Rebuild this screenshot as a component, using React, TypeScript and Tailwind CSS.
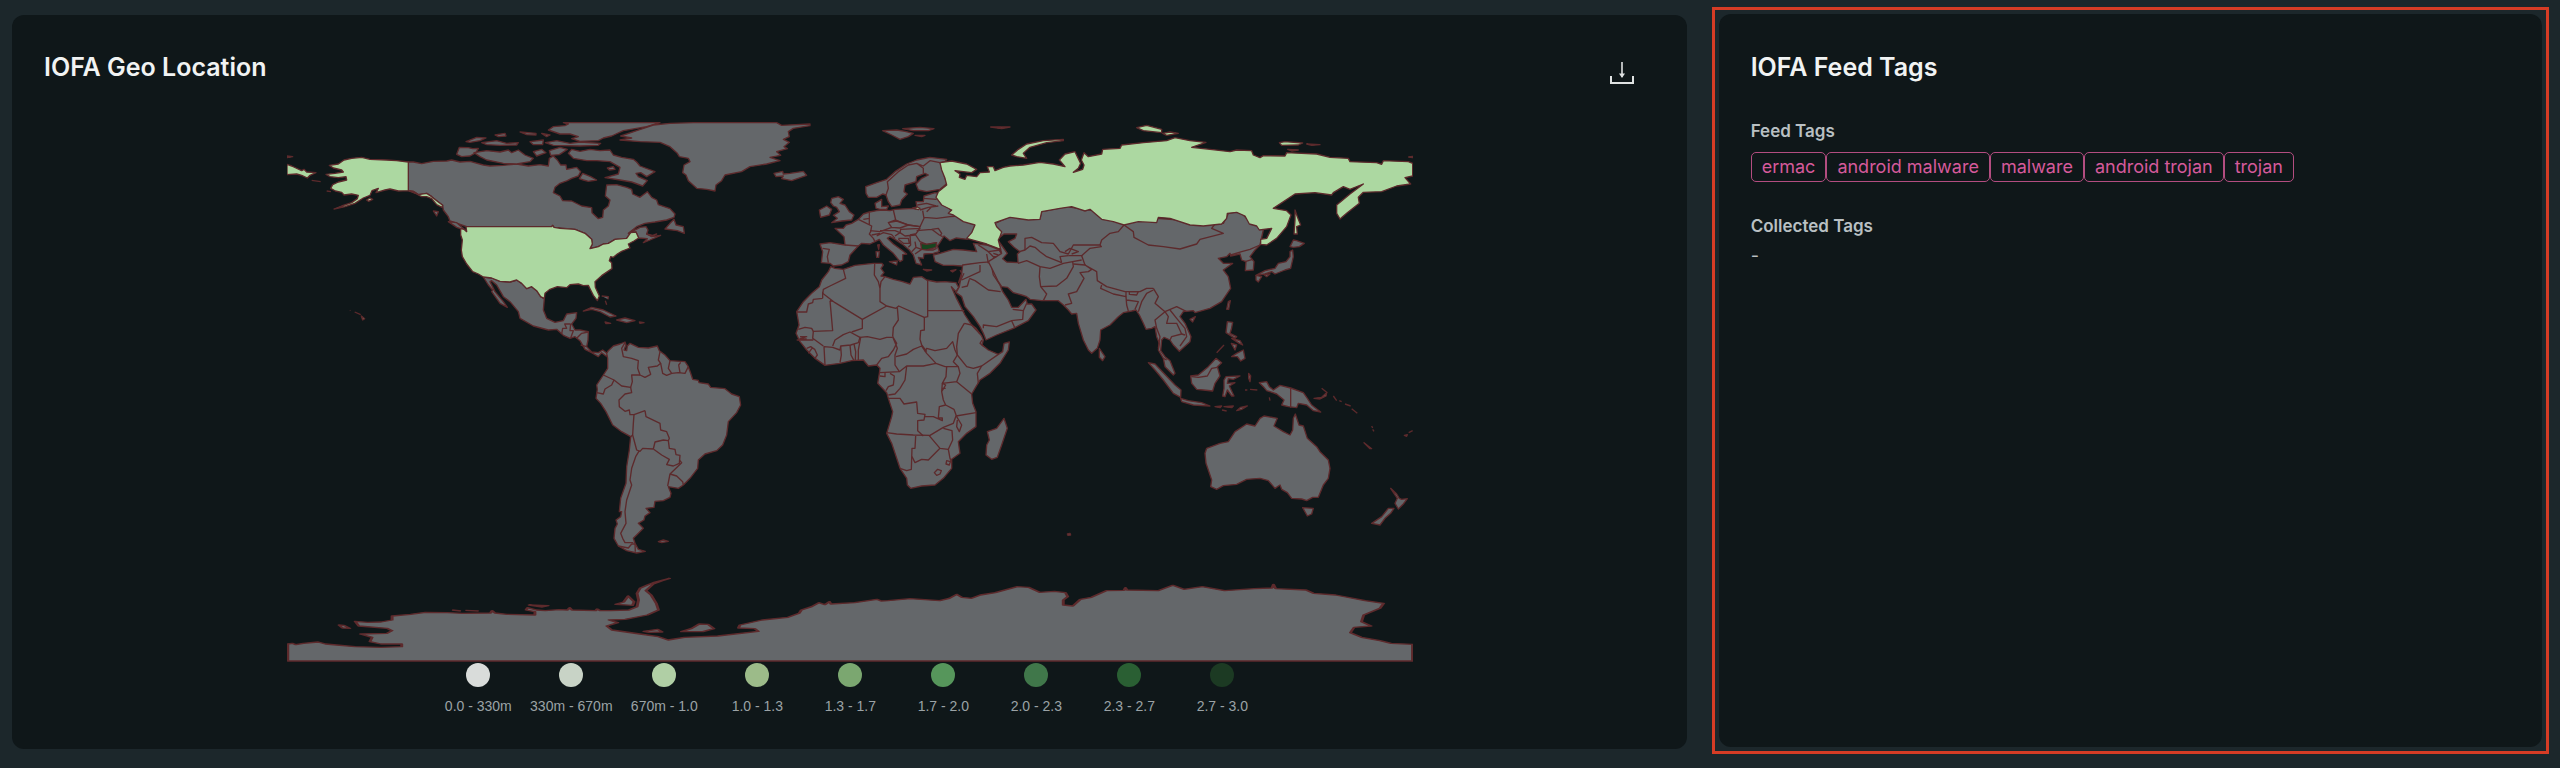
import React from 'react';

interface MapSheet {
  id: string;
  transform: string;
  land?: string[];
  water?: string[];
  active?: string[];
  strong?: string[];
  borders?: string[];
}

// Each sheet has its own origin on the world map, the outlines below are local to it.
const SHEETS: MapSheet[] = [
  {
    id: 'north-america',
    transform: 'translate(810 330)',
    land: [
      // Canada
      'M415,156 430,156 455,161 490,154 530,153 545,150 570,156 600,154 640,165 660,168 700,166 740,162 775,168 810,164 835,168 838,145 850,138 862,150 872,165 888,165 890,178 905,175 920,172 932,185 925,198 905,205 892,212 870,220 855,232 850,248 870,258 878,272 905,273 935,288 965,293 966,308 985,326 998,322 1000,300 1015,288 1020,270 1006,258 1010,225 1040,224 1070,232 1085,238 1088,252 1110,262 1132,245 1145,262 1160,270 1165,284 1200,296 1215,312 1212,322 1190,330 1155,336 1125,340 1100,350 1075,370 1110,352 1128,350 1134,360 1130,372 1145,380 1172,376 1140,390 1120,398 1132,386 1106,384 1098,366 1082,368 1070,385 1035,388 1015,400 1000,402 985,410 960,416 967,402 965,388 945,370 915,358 852,352 848,346 845,350 590,350 575,345 540,333 535,320 520,300 518,286 500,272 485,260 470,250 445,254 430,244 415,242Z',
      // Arctic islands
      'M560,133 568,112 595,113 608,116 625,115 618,128 600,138 575,140Z',
      'M612,128 650,122 690,126 715,120 725,128 745,120 765,135 790,145 780,155 740,162 700,160 650,150 630,140Z',
      'M588,95 620,82 648,84 630,92 600,97Z',
      'M635,98 680,92 710,100 745,98 740,105 690,106 650,104Z',
      'M675,75 705,70 708,78 685,80Z',
      'M750,66 798,70 798,75 770,74Z',
      'M780,95 820,90 818,104 790,104Z',
      'M790,125 815,118 828,128 800,138Z',
      'M815,70 840,75 830,80Z',
      'M826,98 860,92 900,100 930,96 992,100 985,106 930,108 850,106Z',
      'M838,122 870,112 892,118 868,134 842,136Z',
      'M835,60 850,50 885,47 895,42 880,38 1170,38 1130,50 1060,62 1025,78 1000,84 985,92 930,94 905,86 925,80 900,72 870,72Z',
      'M895,130 905,118 930,124 960,118 990,122 1020,120 1030,135 1055,142 1090,148 1100,156 1110,168 1155,185 1130,200 1112,188 1098,190 1105,200 1132,212 1118,228 1085,216 1050,210 1005,203 1045,192 1050,172 1020,155 980,152 950,152 910,145Z',
      'M928,206 938,190 962,200 980,210 955,214 940,210Z',
      'M1012,174 1030,170 1035,178 1018,180Z',
      'M1185,357 1200,340 1212,328 1218,345 1240,350 1243,370 1222,362Z',
      'M1130,372 1148,376 1160,372 1150,378Z',
      'M535,335 560,338 588,362 560,352Z',
      'M490,303 505,305 500,318Z',
      // Greenland
      'M1052,78 1100,62 1150,45 1200,40 1270,38 1520,38 1535,46 1620,42 1620,47 1570,55 1555,65 1558,80 1540,88 1558,97 1542,110 1552,116 1520,125 1532,136 1500,142 1530,152 1490,162 1440,170 1415,185 1365,195 1355,212 1338,225 1335,243 1310,238 1280,235 1255,212 1248,195 1238,188 1242,165 1260,155 1255,145 1228,140 1222,130 1200,110 1170,97 1110,95 1050,90 1085,84Z',
      'M1512,190 1538,184 1540,192 1560,190 1600,184 1610,196 1565,212 1535,206 1540,198 1518,200Z',
      // Mexico and Central America
      'M640,501 665,504 690,514 720,516 740,510 755,520 770,536 785,530 800,542 812,560 823,566 820,600 830,625 855,637 880,632 890,612 920,608 918,625 905,642 915,660 930,660 955,665 954,690 950,710 965,726 985,728 998,720 1018,735 1008,738 995,728 985,740 965,728 945,718 930,692 915,680 900,685 880,676 860,658 835,660 790,648 750,625 745,605 720,575 700,560 680,525 665,512 660,515 675,545 700,575 712,592 690,580 665,545 668,540 655,525Z',
      'M940,603 965,592 1000,600 1038,618 1020,621 990,605 965,598Z',
      'M1040,630 1065,624 1095,632 1070,638Z',
      'M1005,636 1022,640 1008,641Z',
      'M1108,636 1122,638 1110,640Z',
      'M995,558 1015,560 1014,568',
      'M1006,572 1010,584',
    ],
    active: [
      'M415,156 380,152 350,150 300,148 275,142 245,145 222,150 205,162 178,166 190,174 215,180 220,186 195,190 168,193 180,200 205,203 228,200 230,210 205,216 188,224 182,235 196,243 215,247 222,255 245,252 265,256 262,266 245,278 215,288 192,297 225,290 255,280 280,264 300,256 306,242 325,235 318,248 345,240 360,237 385,243 415,242 440,252 455,260 470,260 485,266 500,284 516,292 518,286 500,272 485,260 470,250 445,254 430,244 415,242Z',
      'M51,163 65,168 95,182 102,178 110,186 138,188 120,196 112,204 95,196 80,192 51,194Z',
      'M51,138 68,140 51,143Z',
      'M290,270 300,264 308,268 296,274Z',
      'M125,211 152,215',
      'M170,243 183,245',
      'M274,618 284,626 278,630Z',
      'M240,601 241,602',
      'M254,606 272,614',
      'M572,356 582,358 590,365 588,350 845,350 848,346 852,352 870,355 915,358 945,370 965,388 967,402 960,416 985,410 1000,402 1015,400 1035,388 1070,385 1082,368 1098,366 1106,384 1092,393 1075,402 1080,414 1055,424 1042,432 1030,442 1022,440 1018,452 1025,458 1026,476 995,497 975,515 976,532 988,558 982,572 970,556 962,540 955,526 940,527 925,522 900,524 890,533 862,530 840,538 825,550 823,566 812,560 800,542 785,530 770,536 755,520 740,510 720,516 690,514 665,504 640,501 625,492 608,485 590,462 577,440 574,420 577,390 572,375Z',
    ],
    borders: [
      'M875,672 878,655 890,655 884,642 902,642',
      'M902,642 900,662 910,662 902,684',
      'M920,685 935,670 955,666',
      'M932,705 950,710',
    ],
  },
  {
    id: 'south-america',
    transform: 'translate(1710 960)',
    land: [
      'M110,100 115,92 130,78 150,72 165,66 168,75 162,90 170,92 172,78 180,70 205,82 235,84 262,78 268,92 285,105 300,122 345,125 355,140 362,160 368,178 385,181 387,188 415,192 422,202 465,206 485,222 508,230 512,255 500,278 475,305 470,345 458,375 440,392 405,402 385,420 383,445 360,475 340,495 325,505 295,500 303,520 300,532 280,542 255,544 252,562 228,565 240,578 225,588 222,600 205,610 220,625 200,645 190,655 195,670 205,688 226,694 200,699 170,692 145,678 132,655 135,625 142,612 138,600 152,590 155,575 148,575 152,535 168,490 170,440 178,390 182,350 155,335 128,315 108,275 92,250 78,235 82,208 80,195 100,165 113,145 113,115Z',
      'M265,665 280,660 295,664 275,668Z',
    ],
    borders: [
      'M165,68 155,85 160,110 185,115 205,122 203,145 210,165 225,172 242,163 235,142 262,138 272,130 265,120 270,95',
      'M210,165 185,165 187,185 182,202 155,198 132,180 100,165',
      'M132,180 125,195 105,207 100,222 80,218',
      'M182,202 185,218 165,222 147,240 148,260 165,274 178,270 180,284 192,284 225,272',
      'M192,284 190,310 188,345 200,390 210,394 218,385 250,387 M225,272 228,290 270,310 272,330 290,335 298,355 295,362',
      'M250,387 255,366 280,360 295,362 298,385 315,388 318,404 330,406 328,430 310,438 290,434 298,418 275,405 250,387',
      'M328,420 335,428 300,462 293,498 M300,462 320,468 338,485 340,495',
      'M182,350 188,345 M208,392 197,410 185,445 180,480 185,495 170,540 165,575 168,610 152,640 158,655 165,668 190,668',
      'M145,678 175,684 185,672 195,672 196,695',
      'M272,130 278,160 290,166 305,160 325,158 345,160 355,140 M300,122 295,145 305,160 M332,127 326,135 330,158',
    ],
  },
  {
    id: 'africa',
    transform: 'translate(2340 720)',
    land: [
      'M152,80 165,85 190,88 225,76 280,70 305,70 310,75 303,85 312,98 303,108 315,110 340,118 365,124 390,132 400,112 425,110 440,120 470,126 495,125 528,128 536,142 528,155 514,140 528,172 545,205 555,225 575,255 588,265 605,288 610,300 606,315 625,330 655,343 668,335 672,310 688,306 685,330 660,370 630,400 600,420 588,440 575,462 578,490 588,515 588,560 560,580 535,605 540,640 515,658 515,685 490,715 465,735 425,738 392,745 382,735 380,715 360,685 345,640 335,610 320,580 335,530 338,515 325,475 320,458 293,430 298,400 300,385 290,375 265,378 250,360 215,362 180,370 135,376 105,355 80,330 60,305 48,280 57,255 50,215 70,185 95,160 118,140 125,120 145,95Z',
      'M672,535 682,565 665,615 652,652 635,658 618,645 620,615 628,600 622,575 650,565Z',
      'M862,882 870,880 872,885 864,886Z',
    ],
    borders: [
      'M190,88 197,115 150,138 130,148 128,165 M128,175 100,178 98,188 85,192 80,216 50,216 M128,155 128,175',
      'M128,160 165,188 247,238 320,198 M150,182 158,272 100,274 95,265 75,262 55,268 M150,182 158,184',
      'M320,198 300,185 300,145 295,125 283,105 284,72 M300,145 303,125 315,110',
      'M443,122 443,230 433,232 356,198 348,205 320,198 M443,212 553,212',
      'M352,203 355,240 340,262 338,290 M433,232 433,270 422,272 420,298 425,315 440,335',
      'M247,238 247,265 215,276 M240,292 262,290 300,298 320,292 338,292',
      'M158,318 165,300 190,284 210,276 240,292 235,308 212,315 182,318 180,330 158,322 132,320 135,376',
      'M100,274 98,295 130,318 M60,290 80,290 60,296 80,297 M50,300 100,300 M80,325 92,320 104,328 112,345 105,355 M85,340 98,322',
      'M182,318 184,345 180,368 M210,315 213,345 222,362 M222,312 227,335 226,362 M242,292 235,330 235,360',
      'M338,290 350,310 340,330 325,350 305,355 290,375 M338,290 352,325 345,345 345,375 358,395 300,398',
      'M348,350 380,342 400,328 425,318 M425,318 440,340 468,370 M358,395 380,378 430,378 468,370 495,380',
      'M300,408 315,410 315,398 M330,400 343,408 340,435 325,440 318,452 M380,378 375,420 360,445 345,462 325,465',
      'M435,335 440,325 465,332 500,325 518,305 525,330 532,345 520,365 535,380 495,380',
      'M553,250 535,280 530,320 532,345 560,380 580,385 605,378 655,343 M553,250 575,255 600,282 M606,300 600,310 612,320',
      'M535,380 540,400 530,425 575,462 M605,378 592,400 595,430 M500,380 498,410 487,430 530,425',
      'M487,430 485,455 497,435 487,430 M485,455 490,480 497,495 522,508 M485,445 497,445',
      'M325,475 360,475 372,492 410,486 413,520 435,523 432,540 413,542 413,572 430,588',
      'M320,578 350,582 400,585 450,586 490,562 520,550 528,528 588,518',
      'M435,530 460,530 487,542 487,534 475,534 478,500 497,495 M522,508 530,530 545,555 538,575 530,560 532,540',
      'M447,586 480,625 505,628 518,600 516,572 490,565 M407,588 405,625 396,625 394,688 380,692 360,685',
      'M396,650 405,668 425,658 445,660 480,625 M505,628 510,655 515,668 M500,662 498,672 508,675 511,665Z',
      'M463,698 473,688 484,692 480,702 470,706Z',
    ],
  },
  {
    id: 'europe',
    transform: 'translate(2340 330)',
    land: [
      'M257,230 290,218 320,208 345,185 380,162 410,150 450,142 500,148 495,155 480,158 490,185 495,205 502,220 480,238 440,245 415,240 408,222 425,205 445,195 435,190 410,200 408,215 375,225 372,245 382,252 365,270 360,285 335,290 325,275 318,255 308,252 290,262 265,262 258,250Z',
      'M285,280 305,268 305,290 325,288 320,298 300,298 288,295Z',
      'M155,265 175,260 190,268 180,280 195,285 208,305 222,315 215,330 185,333 155,338 172,325 160,316 178,305 170,292 160,288 152,278Z',
      'M118,300 140,288 155,298 148,315 122,322 120,312Z',
      'M120,402 150,398 195,405 192,380 165,355 190,355 198,345 215,340 235,328 250,312 268,306 290,302 310,300 330,302 345,298 400,295 412,298 408,275 430,275 432,258 465,248 480,250 480,262 520,310 550,325 585,345 575,375 562,388 528,384 510,392 492,378 478,400 472,408 478,425 460,430 432,432 430,445 415,442 425,465 408,460 400,435 388,420 370,405 345,388 330,380 322,385 340,402 365,420 380,432 368,434 368,450 360,455 340,430 310,405 298,388 285,395 270,402 245,400 235,408 210,435 205,455 185,465 160,468 150,460 124,458 128,425Z',
      'M328,455 352,453 350,465Z',
      'M288,425 298,424 296,442 290,442Z',
      'M293,405 298,404 296,418Z',
      'M430,478 455,480 440,483Z',
      'M512,482 528,479 518,486Z',
      'M460,435 480,430 520,418 550,420 590,425 580,400 620,405 655,418 672,440 665,455 640,450 628,462 580,462 545,468 520,466 490,466 465,455Z',
      // Levant, Iraq and the Arabian peninsula
      'M548,465 600,458 640,455 660,525 668,545 685,570 695,592 715,592 738,568 742,582 755,582 768,600 745,632 700,655 650,675 618,690 610,670 600,650 580,620 555,590 545,560 528,548 538,530 545,490Z',
      'M308,62 350,60 375,64 400,70 385,80 360,88 335,75Z',
      'M368,56 420,52 462,56 445,62 400,62Z',
      'M405,76 435,76 425,80Z',
      'M632,51 690,51 665,56Z',
    ],
    active: ['M398,294 412,291 420,295 415,299Z', 'M650,52 662,52 658,55Z'],
    strong: ['M422,400 440,403 470,398 468,412 440,420 425,418Z'],
    borders: [
      'M318,255 325,235 322,215 355,185 385,165 410,160 430,168 450,152 480,158 M410,160 430,175 430,190',
      'M128,415 148,418 142,440 145,458 M195,405 235,408',
      'M235,328 255,338 275,348 272,365 268,372 280,385 285,395 M268,306 268,325 250,328 M268,325 268,345',
      'M340,300 347,330 325,338 335,352 300,365 270,362 M325,338 350,333 385,345 360,354 335,352',
      'M347,330 385,345 420,350 432,325 428,302 M432,322 470,325 510,320 540,318',
      'M420,300 445,292 475,288 M412,285 440,280 468,288 M430,265 470,268 M440,305 455,290',
      'M362,358 420,355 405,375 375,378 360,368Z M385,345 420,350 415,362',
      'M410,362 455,358 478,375 488,380 M455,358 475,355 485,370 480,378',
      'M390,375 405,372 420,395 440,403 470,398 M275,375 300,370 M290,378 310,368 335,374 345,385 M300,362 345,362 360,368 345,378',
      'M355,385 385,385 388,400 370,400 355,388 M390,375 392,405 385,412 M405,395 408,412 395,425 M408,412 425,418 405,432',
      'M442,420 460,420 470,415 M595,405 625,425 660,420 M620,432 625,460 M625,425 640,440 655,455 M640,430 655,435',
      'M610,655 610,645 650,650 695,632 728,628 730,602 698,598 M705,655 695,632',
      'M600,465 600,485 545,510 M568,505 585,512 625,540 662,545 M545,532 562,528 568,508',
      'M540,480 545,490 535,520 M730,602 740,580 M635,470 640,495 660,525 M552,490 540,515',
    ],
  },
  {
    id: 'asia',
    transform: 'translate(3030 330)',
    land: [
      'M-45,340 -35,395 -25,430 -65,455 -52,480 -35,515 -25,530 -8,532 10,548 35,555 50,560 60,568 95,572 145,572 160,585 175,600 185,612 200,610 205,640 220,690 235,720 245,730 262,715 270,690 272,660 300,645 325,620 340,608 365,603 378,600 388,615 400,640 408,658 425,655 435,650 440,680 448,700 445,720 460,745 465,770 490,795 495,790 480,752 465,740 452,722 455,690 462,682 480,690 490,705 508,724 540,695 543,680 525,640 510,620 520,605 550,602 555,608 600,595 635,575 662,535 655,500 640,480 668,460 640,460 625,445 650,440 660,430 662,438 690,432 695,450 708,455 706,482 730,480 732,455 720,440 735,420 750,405 760,360 715,330 690,305 655,310 640,340 440,325 240,300 170,290 95,305 90,325 0,320Z',
      'M268,715 285,740 278,752 268,742Z',
      'M540,628 556,620 548,636Z',
      'M650,598 655,575 661,572 656,598Z',
      'M850,390 860,392 883,400 868,410 850,412 840,410Z',
      'M840,425 848,420 850,440 842,475 825,480 795,492 785,485 765,492 738,496 765,482 795,475 805,460 828,455 840,440Z',
      'M738,496 755,500 745,516 738,510Z',
      'M762,494 780,492 770,500Z',
    ],
    water: [
      'M-38,388 -18,372 20,372 15,385 -5,395 12,412 30,425 22,432 24,458 -10,456 -22,446 -8,430 -28,402Z',
    ],
    active: [
      'M-210,158 -175,153 -130,162 -100,178 -115,188 -165,182 -150,192 -152,202 -135,208 -130,196 -100,200 -90,188 -62,186 -68,170 -50,170 -45,182 -20,172 0,168 40,165 90,157 130,162 165,170 148,150 165,132 195,125 202,140 212,160 205,175 190,187 218,178 222,165 214,150 222,128 235,140 275,132 278,118 330,115 335,105 400,98 470,92 495,83 540,92 588,97 545,112 600,118 660,125 680,120 725,122 730,135 750,143 760,137 825,138 830,128 920,132 960,142 1015,145 1020,155 1100,158 1115,163 1120,152 1195,155 1208,160 1208,198 1185,203 1202,222 1160,228 1115,245 1060,247 1045,262 1048,280 1010,310 990,327 980,310 980,285 1020,252 1060,222 1020,238 1000,230 970,248 965,255 915,248 855,252 790,295 830,302 843,315 830,350 800,385 770,405 752,403 752,388 770,385 785,355 748,360 740,348 718,342 705,318 680,307 652,310 650,325 635,342 580,348 540,345 480,325 445,322 440,338 385,335 342,345 310,335 275,328 240,298 225,303 185,290 150,295 95,305 90,328 55,330 0,322 -45,338 -40,350 -25,365 -30,380 -35,390 -28,418 -70,402 -130,385 -115,368 -105,345 -140,335 -170,315 -185,310 -175,300 -205,285 -222,262 -215,245 -190,225 -195,205 -205,180Z',
      'M5,135 25,118 50,102 100,92 160,88 160,92 110,98 60,112 40,130 50,145 20,140Z',
      'M380,53 410,46 455,58 455,68 400,62Z',
      'M458,70 480,66 505,70 470,76Z',
      'M808,98 825,95 878,99 865,105 815,106Z',
      'M890,102 930,104 905,106Z',
      'M833,118 865,120 845,123Z',
      'M855,300 862,320 872,345 860,350 862,372 852,372 855,330Z',
      'M1196,141 1208,139 1208,143Z',
    ],
    borders: [
      'M45,420 45,385 65,382 95,398 130,400 150,425 175,432 190,405 270,405 274,410 240,415 215,437 175,437',
      'M20,427 45,420 60,408 75,412 90,425 110,440 155,458 M165,425 180,415 205,425 185,432',
      'M24,460 50,452 90,470 88,500 92,530 110,552 100,572 M92,530 140,528 170,505 190,470 188,455 160,460 120,475 90,470',
      'M155,458 150,440 175,437 M215,437 225,465 190,462 M215,450 188,455',
      'M342,345 325,365 300,370 275,390 270,405 M342,345 370,365 372,382 415,405 460,410 510,417 560,402 570,388 640,370 605,355 615,342 635,342',
      'M225,465 245,478 235,485 210,488 222,505 200,545 175,552 185,580 165,585 M225,465 260,485 262,512 290,530 345,545 390,545 410,535 430,535',
      'M275,525 272,535 310,552 348,560 348,545 M358,545 385,545 380,555 358,553Z',
      'M348,560 350,585 355,603 M350,570 385,575 375,598 M385,605 395,575 410,550 430,540',
      'M430,535 445,560 435,580 465,605 435,630 440,655 450,680 445,715',
      'M465,605 475,620 470,640 500,640 515,672 485,680 480,690 M465,605 500,590 530,605',
      'M480,600 500,625 525,655 530,680 510,708 M515,672 525,675 M460,745 470,750',
      'M662,435 695,425 720,418 750,405 M705,455 728,448 M-50,440 -40,440',
    ],
  },
  {
    id: 'oceania',
    transform: 'translate(3360 870)',
    land: [
      'M85,218 105,222 130,248 165,285 183,300 182,322 160,310 130,270 105,240Z',
      'M182,325 205,332 245,338 270,348 220,345 185,335Z',
      'M285,350 305,348 300,353Z',
      'M312,350 340,348 335,353Z',
      'M306,360 320,363',
      'M350,362 362,352 382,348 365,358Z',
      'M212,258 235,255 265,230 288,205 305,218 292,230 300,258 285,280 278,303 250,300 230,298 215,280Z',
      'M312,270 318,260 360,258 340,268 325,266 322,280 345,278 328,288 342,318 335,318 322,300 315,320 308,318 312,295Z',
      'M322,95 338,97 334,118 330,130 350,140 345,145 318,128Z',
      'M335,145 360,152 368,165 358,160Z',
      'M334,160 350,165 345,180Z',
      'M335,200 350,190 370,180 375,205 362,213 352,200Z',
      'M290,188 312,165',
      'M386,250 392,258 390,275 386,265Z',
      'M375,300 382,300 M390,298 412,300',
      'M448,322 450,332',
      'M418,278 440,275 448,290 460,300 480,286 512,294 550,308 562,325 575,345 602,366 580,362 560,345 535,340 530,353 505,350 485,345 492,330 470,312 450,305 440,302 430,290Z',
      'M582,325 605,322 620,308 618,318 600,327Z',
      'M605,295 622,308',
      'M640,318 650,332',
      'M658,332 665,335 M675,342 692,348 M695,356 712,370',
      'M755,408 758,414 M758,418 762,424',
      'M732,458 755,476 750,476Z',
      'M853,436 862,434 860,439Z',
      'M866,428 878,422',
      'M260,475 300,460 325,455 345,425 380,402 405,408 420,385 432,378 472,385 462,408 490,425 510,435 518,420 520,385 526,372 537,405 550,408 562,445 590,470 600,485 625,510 630,535 625,565 610,585 595,622 578,622 560,632 545,627 515,625 502,608 485,598 480,585 465,595 445,572 420,565 380,568 350,583 310,587 290,598 272,590 275,570 258,520 255,490Z',
      'M548,653 580,655 575,672 562,678Z',
      'M812,595 830,612 838,625 845,628 862,626 850,642 835,657 825,640 832,625Z',
      'M805,655 822,655 812,670 795,685 780,705 755,700 785,680Z',
    ],
    borders: ['M512,294 512,353', 'M215,260 235,262 262,258 275,235 292,232'],
  },
  {
    id: 'antarctica',
    transform: 'translate(810 1680) scale(2.22 1)',
    land: [
      'M24,303 L24,252 30,250 35,254 45,250 65,246 75,252 90,255 115,260 150,262 178,260 178,252 150,252 135,245 138,232 122,222 158,220 165,212 158,205 120,198 115,184 132,187 150,186 165,180 165,168 190,163 210,157 240,158 260,160 298,159 300,152 304,159 320,163 358,165 358,155 346,150 348,143 360,150 372,152 390,149 402,150 405,143 408,150 440,152 442,147 446,152 460,152 485,150 496,140 498,120 496,100 500,85 510,75 518,68 540,55 530,62 518,72 508,92 515,105 522,130 525,150 510,165 480,178 458,180 470,188 455,198 462,210 500,222 525,230 538,240 560,232 605,228 660,214 655,206 633,204 635,195 665,180 700,172 715,160 718,150 732,140 742,128 750,134 756,125 758,132 790,128 820,118 826,123 835,122 865,116 905,122 918,115 928,103 935,112 948,115 960,105 980,98 1010,80 1025,82 1040,97 1060,94 1075,98 1078,110 1072,120 1072,135 1085,138 1095,118 1110,112 1130,92 1154,91 1156,83 1158,90 1200,92 1220,76 1235,88 1260,80 1290,92 1330,86 1354,84 1356,73 1359,86 1400,90 1410,100 1440,105 1480,122 1505,130 1500,145 1478,165 1475,185 1488,198 1465,202 1460,218 1475,232 1500,242 1515,250 1544,253 1544,303Z',
      'M93,195 100,196 108,205 98,204Z',
      'M467,133 478,126 484,108 492,125 490,136Z',
      'M556,215 570,205 580,192 592,193 600,206 585,215Z',
      'M505,214 524,208 530,216 512,217Z',
      'M350,135 376,137 368,141Z',
      'M246,150 258,153 M264,151 282,153',
    ],
  },
];

const LEGEND = [
  { label: '0.0 - 330m', color: 'bg-[#d9dcda]' },
  { label: '330m - 670m', color: 'bg-[#c8d3c6]' },
  { label: '670m - 1.0', color: 'bg-[#b0cfa5]' },
  { label: '1.0 - 1.3', color: 'bg-[#9cbb89]' },
  { label: '1.3 - 1.7', color: 'bg-[#7ba770]' },
  { label: '1.7 - 2.0', color: 'bg-[#56965b]' },
  { label: '2.0 - 2.3', color: 'bg-[#40774a]' },
  { label: '2.3 - 2.7', color: 'bg-[#2a5f33]' },
  { label: '2.7 - 3.0', color: 'bg-[#1c3a23]' },
];

const FEED_TAGS = ['ermac', 'android malware', 'malware', 'android trojan', 'trojan'];

const WorldMap: React.FC = () => (
  <svg
    viewBox="861 366 3378 1620"
    role="img"
    aria-label="World map of IOFA locations"
    className="block w-[1126px] max-w-full stroke-[#5d2a2c] stroke-[4]"
    strokeLinejoin="round"
  >
    {SHEETS.map((sheet) => (
      <g key={sheet.id} transform={sheet.transform}>
        {sheet.land?.map((d) => <path key={d} d={d} className="fill-[#64676a]" />)}
        {sheet.borders?.map((d) => <path key={d} d={d} fill="none" />)}
        {sheet.water?.map((d) => <path key={d} d={d} className="fill-[#0f1719]" />)}
        {sheet.active?.map((d) => <path key={d} d={d} className="fill-[#acd8a1]" />)}
        {sheet.strong?.map((d) => <path key={d} d={d} className="fill-[#17451f]" />)}
      </g>
    ))}
  </svg>
);

const DownloadIcon: React.FC = () => (
  <svg viewBox="0 0 24 24" className="size-6" fill="none" stroke="currentColor" strokeWidth={2}>
    <path d="M12 1v15" strokeWidth={1.6} />
    <path d="M9 12.5h6l-3 4.5z" fill="currentColor" stroke="none" />
    <path d="M1 15v7h22v-7" />
  </svg>
);

const GeoLocationCard: React.FC = () => (
  <section className="mt-2 mb-[5px] flex flex-col rounded-xl bg-[#0f1719] pt-[34px] pr-[30px] pb-[34px] pl-8">
    <div className="flex h-9 items-start justify-between">
      <h2 className="text-[25px] leading-9 font-semibold text-[#f1f3f3]">IOFA Geo Location</h2>
      <button type="button" aria-label="Download" className="mt-3 mr-[23px] text-[#dfe2e2]">
        <DownloadIcon />
      </button>
    </div>
    <div className="mt-[37px] flex flex-col items-center">
      <WorldMap />
      <ul className="mt-px flex font-['Liberation_Sans',sans-serif] text-sm leading-[18px] text-[#9ba3a6]">
        {LEGEND.map(({ label, color }) => (
          <li key={label} className="flex w-[93px] flex-col items-center gap-2.5 whitespace-nowrap">
            <span className={`size-6 rounded-full ${color}`} />
            {label}
          </li>
        ))}
      </ul>
    </div>
  </section>
);

const FeedTagsCard: React.FC = () => (
  <div className="flex border-[3px] border-[#d63c25] p-1">
    <section className="grow rounded-xl bg-[#0f1719] px-8 pt-[35px] text-lg leading-6 text-[#b9c0c3]">
      <h2 className="text-[25px] leading-9 font-semibold text-[#f1f3f3]">IOFA Feed Tags</h2>
      <h3 className="mt-[34px] text-[17px] leading-6 font-semibold">Feed Tags</h3>
      <ul className="mt-[9px] flex flex-wrap">
        {FEED_TAGS.map((tag) => (
          <li key={tag} className="h-[30px] rounded-[5px] border border-[#b34d80] px-2.5 leading-7 text-[#d65a9b]">
            {tag}
          </li>
        ))}
      </ul>
      <h3 className="mt-8 text-[17px] leading-6 font-semibold">Collected Tags</h3>
      <p className="mt-1.5">-</p>
    </section>
  </div>
);

const App: React.FC = () => {
  return (
    <main className="min-h-screen bg-[#1c272b] font-['Inter',sans-serif]">
      <div className="grid grid-cols-[2fr_1fr] gap-[25px] pt-[7px] pr-[11px] pl-3">
        <GeoLocationCard />
        <FeedTagsCard />
      </div>
    </main>
  );
};

export default App;
